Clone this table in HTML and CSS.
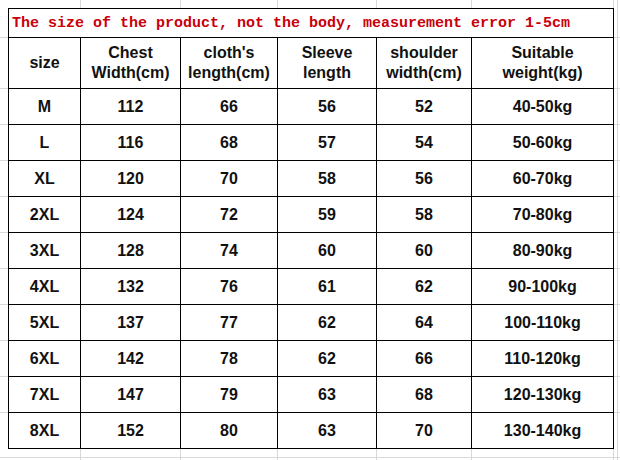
FILE: index.html
```html
<!DOCTYPE html>
<html>
<head>
<meta charset="utf-8">
<link rel="stylesheet" href="styles.css">
</head>
<body>
<table class="chart">
  <colgroup>
    <col class="c1"><col class="c2"><col class="c3"><col class="c4"><col class="c5"><col class="c6">
  </colgroup>
  <tr class="title-row"><td colspan="6" class="title">The size of the product, not the body, measurement error 1-5cm</td></tr>
  <tr class="head-row">
    <th>size</th>
    <th>Chest<br>Width(cm)</th>
    <th>cloth's<br>length(cm)</th>
    <th>Sleeve<br>length</th>
    <th>shoulder<br>width(cm)</th>
    <th>Suitable<br>weight(kg)</th>
  </tr>
  <tr><td>M</td><td>112</td><td>66</td><td>56</td><td>52</td><td>40-50kg</td></tr>
  <tr><td>L</td><td>116</td><td>68</td><td>57</td><td>54</td><td>50-60kg</td></tr>
  <tr><td>XL</td><td>120</td><td>70</td><td>58</td><td>56</td><td>60-70kg</td></tr>
  <tr><td>2XL</td><td>124</td><td>72</td><td>59</td><td>58</td><td>70-80kg</td></tr>
  <tr><td>3XL</td><td>128</td><td>74</td><td>60</td><td>60</td><td>80-90kg</td></tr>
  <tr><td>4XL</td><td>132</td><td>76</td><td>61</td><td>62</td><td>90-100kg</td></tr>
  <tr><td>5XL</td><td>137</td><td>77</td><td>62</td><td>64</td><td>100-110kg</td></tr>
  <tr><td>6XL</td><td>142</td><td>78</td><td>62</td><td>66</td><td>110-120kg</td></tr>
  <tr><td>7XL</td><td>147</td><td>79</td><td>63</td><td>68</td><td>120-130kg</td></tr>
  <tr><td>8XL</td><td>152</td><td>80</td><td>63</td><td>70</td><td>130-140kg</td></tr>
</table>
</body>
</html>
```
FILE: styles.css
```css
html, body {
  margin: 0;
  padding: 0;
  width: 620px;
  height: 460px;
  overflow: hidden;
}
body {
  background-color: #fff;
  background-image:
    linear-gradient(#d9d9d9, #d9d9d9),
    linear-gradient(#d9d9d9, #d9d9d9),
    linear-gradient(#d9d9d9, #d9d9d9),
    linear-gradient(#d9d9d9, #d9d9d9),
    linear-gradient(#d9d9d9, #d9d9d9),
    linear-gradient(#d9d9d9, #d9d9d9),
    linear-gradient(#d9d9d9, #d9d9d9),
    linear-gradient(#d9d9d9, #d9d9d9),
    linear-gradient(#d9d9d9, #d9d9d9),
    linear-gradient(#d9d9d9, #d9d9d9),
    linear-gradient(#d9d9d9, #d9d9d9),
    linear-gradient(#d9d9d9, #d9d9d9),
    linear-gradient(#d9d9d9, #d9d9d9),
    linear-gradient(#d9d9d9, #d9d9d9),
    linear-gradient(#d9d9d9, #d9d9d9),
    linear-gradient(#d9d9d9, #d9d9d9),
    linear-gradient(#d9d9d9, #d9d9d9),
    linear-gradient(#d9d9d9, #d9d9d9),
    linear-gradient(#d9d9d9, #d9d9d9);
  background-repeat: no-repeat;
  background-size:
    1px 100%, 1px 100%, 1px 100%, 1px 100%, 1px 100%, 1px 100%, 1px 100%,
    100% 1px, 100% 1px, 100% 1px, 100% 1px, 100% 1px, 100% 1px,
    100% 1px, 100% 1px, 100% 1px, 100% 1px, 100% 1px, 100% 1px;
  background-position:
    80px 0, 180px 0, 277px 0, 376px 0, 471px 0, 613px 0, 617px 0,
    0 37px, 0 88px, 0 124px, 0 160px, 0 196px, 0 232px,
    0 268px, 0 304px, 0 340px, 0 376px, 0 412px, 0 457px;
}
.chart {
  margin: 8px 0 0 8px;
  border-collapse: collapse;
  table-layout: fixed;
  width: 606px;
  background: #fff;
  font-family: "Liberation Sans", Arial, sans-serif;
  font-weight: bold;
  font-size: 16px;
  color: #111;
}
.c1 { width: 72px; }
.c2 { width: 100px; }
.c3 { width: 97px; }
.c4 { width: 99px; }
.c5 { width: 95px; }
.c6 { width: 142px; }
.chart td, .chart th {
  border: 1px solid #000;
  padding: 0;
  text-align: center;
  vertical-align: middle;
  height: 35px;
  line-height: 20px;
}
.chart th {
  font-weight: bold;
}
.head-row th {
  height: 50px;
}
.title-row td.title {
  height: 26px;
  text-align: left;
  padding: 2px 0 0 3px;
  font-family: "Liberation Mono", "Courier New", monospace;
  font-size: 15px;
  font-weight: bold;
  color: #c8000a;
  white-space: nowrap;
}
```
